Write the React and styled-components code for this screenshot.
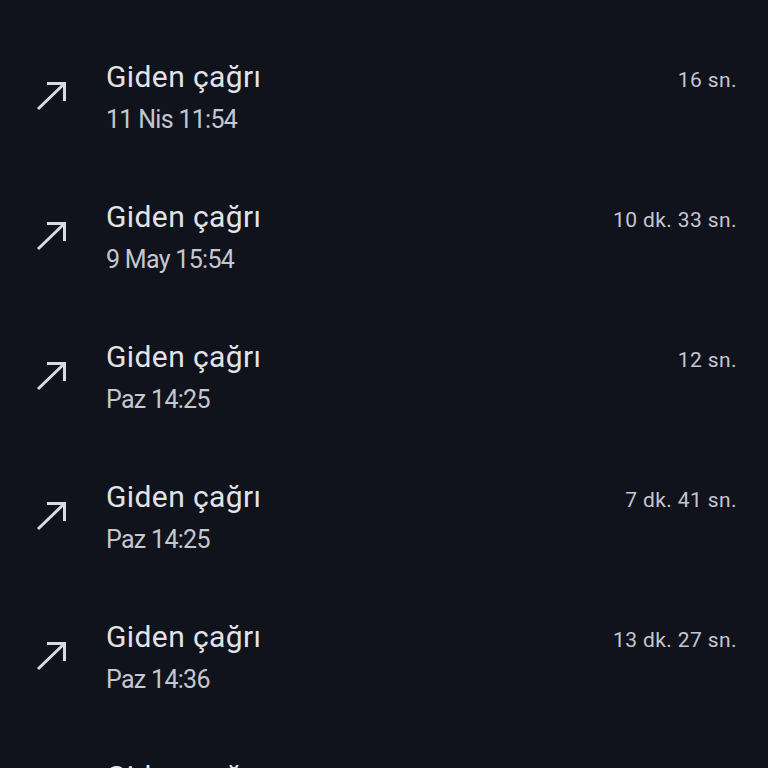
import React from "react";
import styled, { createGlobalStyle } from "styled-components";

const calls = [
  { date: "11 Nis 11:54", duration: "16 sn." },
  { date: "9 May 15:54", duration: "10 dk. 33 sn." },
  { date: "Paz 14:25", duration: "12 sn." },
  { date: "Paz 14:25", duration: "7 dk. 41 sn." },
  { date: "Paz 14:36", duration: "13 dk. 27 sn." },
  { date: "Paz 14:36", duration: "5 sn." },
];

const OutgoingIcon = () => (
  <svg width="40" height="40" viewBox="0 0 40 40" fill="none">
    <path d="M8 32 L34.5 6.5" stroke="#d9dbe3" strokeWidth="3" />
    <path
      d="M17 6.5 H34.5 V24"
      stroke="#d9dbe3"
      strokeWidth="3"
      strokeLinejoin="miter"
    />
  </svg>
);

const App = () => {
  return (
    <>
      <GlobalStyle />
      <List>
        {calls.map((call, i) => (
          <Row key={i}>
            <IconCell>
              <OutgoingIcon />
            </IconCell>
            <Info>
              <Title>Giden çağrı</Title>
              <When>{call.date}</When>
            </Info>
            <Duration>{call.duration}</Duration>
          </Row>
        ))}
      </List>
    </>
  );
};

export default App;

const GlobalStyle = createGlobalStyle`
  html, body {
    margin: 0;
    padding: 0;
    background: #10131b;
  }
  body {
    height: 768px;
    overflow: hidden;
    font-family: Roboto, "Noto Sans", sans-serif;
  }
`;

const List = styled.div`
  display: flex;
  flex-direction: column;
  padding-top: 27px;
`;

const Row = styled.div`
  height: 140px;
  display: grid;
  grid-template-columns: 106px 1fr auto;
  align-items: center;
  padding-right: 31px;
`;

const IconCell = styled.div`
  display: flex;
  padding-left: 30px;
`;

const Info = styled.div`
  display: flex;
  flex-direction: column;
  gap: 11px;
`;

const Title = styled.div`
  font-size: 30px;
  line-height: 34px;
  letter-spacing: 0.4px;
  color: #e2e2e9;
`;

const When = styled.div`
  font-size: 25px;
  line-height: 30px;
  letter-spacing: -0.7px;
  color: #c5c6d0;
`;

const Duration = styled.div`
  align-self: start;
  margin-top: 40px;
  font-size: 21px;
  line-height: 26px;
  letter-spacing: 0.4px;
  color: #c5c6d0;
`;
